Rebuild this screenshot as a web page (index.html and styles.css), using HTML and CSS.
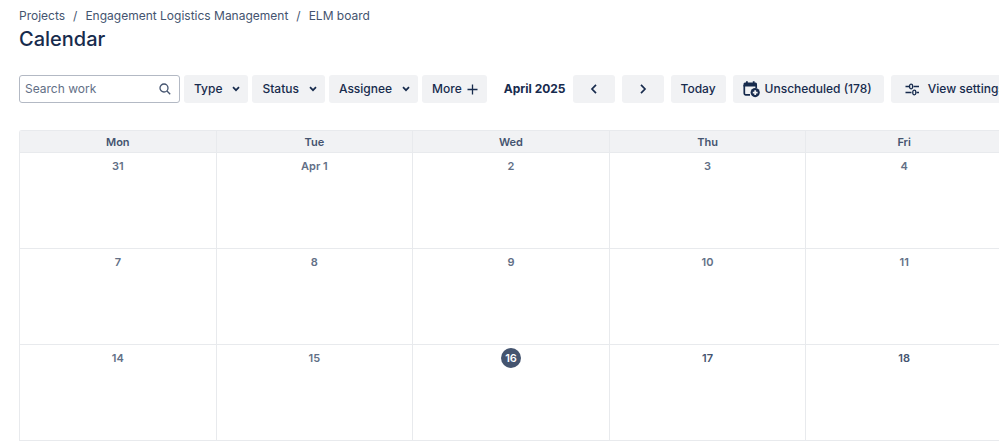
FILE: index.html
```html
<!DOCTYPE html>
<html lang="en">
<head>
<meta charset="utf-8">
<meta name="viewport" content="width=device-width, initial-scale=1">
<title>Calendar</title>
<link rel="stylesheet" href="styles.css">
</head>
<body>
<main class="page">
  <nav class="breadcrumbs" aria-label="Breadcrumbs">
    <a href="#">Projects</a><span>/</span><a href="#">Engagement Logistics Management</a><span>/</span><a href="#">ELM board</a>
  </nav>
  <h1 class="title">Calendar</h1>

  <div class="toolbar">
    <div class="filters">
      <label class="search">
        <input type="text" placeholder="Search work" aria-label="Search work">
        <svg class="icon-search" viewBox="0 0 12 12" width="12" height="12" fill="none" stroke="currentColor" stroke-width="1.3"><circle cx="5" cy="5" r="4"/><path d="M8 8l3.200 3.200"/></svg>
      </label>
      <button class="btn drop" type="button">Type<svg viewBox="0 0 8 6" width="8" height="6"><path d="M1 1.200l3 3 3-3"/></svg></button>
      <button class="btn drop" type="button">Status<svg viewBox="0 0 8 6" width="8" height="6"><path d="M1 1.200l3 3 3-3"/></svg></button>
      <button class="btn drop" type="button">Assignee<svg viewBox="0 0 8 6" width="8" height="6"><path d="M1 1.200l3 3 3-3"/></svg></button>
      <button class="btn more" type="button">More<svg viewBox="0 0 11 11" width="11" height="11"><path d="M5.500 .5v10M.5 5.500h10"/></svg></button>
    </div>
    <div class="period">
      <h2 class="month">April 2025</h2>
      <div class="actions">
        <button class="btn arrow" type="button" aria-label="Previous month"><svg viewBox="0 0 8 10" width="8" height="10"><path d="M6 .8L2 5l4 4.200"/></svg></button>
        <button class="btn arrow" type="button" aria-label="Next month"><svg viewBox="0 0 8 10" width="8" height="10"><path d="M2 .8L6 5 2 9.200"/></svg></button>
        <button class="btn" type="button">Today</button>
        <button class="btn unscheduled" type="button"><svg viewBox="0 0 17 17" width="17" height="17"><path d="M1.300 4v8.500a1.300 1.300 0 0 0 1.300 1.300H7M13.200 4v3"/><path class="solid" d="M.5 3a1.500 1.500 0 0 1 1.500-1.500h1V.3h1.800v1.200h5V.3h1.800v1.200h1A1.500 1.500 0 0 1 14 3v2.500H.5z"/><circle class="solid" cx="12.200" cy="11.600" r="4.600"/><path class="cut" d="M12.200 9.200v4.800M9.800 11.600h4.800"/></svg>Unscheduled (178)</button>
        <button class="btn settings" type="button"><svg viewBox="0 0 15 13" width="15" height="13"><path d="M.5 3.500H4M8.500 3.500h5.500M.5 9.500h6M11.500 9.500H14"/><rect x="4.600" y="1.200" width="3" height="4.600" rx="1.500"/><rect x="7.800" y="7.200" width="3" height="4.600" rx="1.500"/></svg>View settings</button>
      </div>
    </div>
  </div>

  <table class="calendar">
    <thead>
      <tr><th scope="col">Mon</th><th scope="col">Tue</th><th scope="col">Wed</th><th scope="col">Thu</th><th scope="col">Fri</th></tr>
    </thead>
    <tbody>
      <tr><td>31</td><td>Apr 1</td><td>2</td><td>3</td><td>4</td></tr>
      <tr><td>7</td><td>8</td><td>9</td><td>10</td><td>11</td></tr>
      <tr><td>14</td><td>15</td><td><span class="today">16</span></td><td class="future">17</td><td class="future">18</td></tr>
    </tbody>
  </table>
</main>
</body>
</html>
```
FILE: styles.css
```css
* {
  box-sizing: border-box;
}

html {
  overflow: hidden;
}

body {
  margin: 0;
  background: #fff;
  color: #172b4d;
  font-family: Inter, "Liberation Sans", sans-serif;
  font-size: 12px;
  line-height: 16px;
}

.page {
  padding: 8px 0 0 19px;
}

.breadcrumbs {
  display: flex;
  gap: 8px;
  color: #44546f;
}

.breadcrumbs a {
  color: inherit;
  text-decoration: none;
}

.title {
  margin: 0;
  font-size: 20px;
  font-weight: 500;
  line-height: 30px;
}

.toolbar {
  display: flex;
  gap: 17px;
  margin-top: 21px;
  white-space: nowrap;
}

.filters {
  display: flex;
  gap: 4px;
}

.period,
.actions {
  display: flex;
  align-items: center;
  gap: 7px;
}

.search {
  display: flex;
  align-items: center;
  width: 161px;
  height: 28px;
  padding: 0 8px 0 5px;
  border: 1px solid #b3b9c4;
  border-radius: 3px;
  color: #44546f;
}

.search input {
  flex: 1;
  min-width: 0;
  padding: 0;
  border: 0;
  outline: 0;
  background: none;
  color: #172b4d;
  font: inherit;
}

.search input::placeholder {
  color: #626f86;
  opacity: 1;
}

.btn {
  display: flex;
  flex: none;
  align-items: center;
  justify-content: center;
  height: 28px;
  padding: 0 10px;
  border: 0;
  border-radius: 3px;
  background: #f1f2f4;
  color: #172b4d;
  font: inherit;
  font-weight: 500;
}

.btn svg {
  flex: none;
  fill: none;
  stroke: currentColor;
  stroke-width: 1.7;
}

.btn .solid {
  fill: currentColor;
  stroke: none;
}

.btn .cut {
  stroke: #f1f2f4;
  stroke-width: 1.8;
}

.drop {
  gap: 10px;
  padding-right: 8px;
}

.more {
  gap: 5px;
  padding-right: 9px;
}

.more svg,
.settings svg {
  stroke-width: 1.3;
}

.month {
  margin: 0;
  font-size: 12px;
  font-weight: 700;
}

.arrow {
  width: 42px;
}

.unscheduled {
  gap: 5px;
  padding-right: 12px;
}

.settings {
  gap: 8px;
  padding-left: 14px;
}

.calendar {
  width: calc(100% + 4px);
  margin-top: 27px;
  border: 1px solid #e8eaed;
  border-width: 1px 0 0 1px;
  border-radius: 3px 0 0 0;
  border-spacing: 0;
  table-layout: fixed;
  font-size: 11px;
  text-align: center;
}

.calendar th,
.calendar td {
  padding: 0;
  border-right: 1px solid #e8eaed;
  border-bottom: 1px solid #e8eaed;
}

.calendar th {
  height: 22px;
  background: #f1f2f4;
  color: #44546f;
  font-weight: 600;
}

.calendar td {
  height: 96px;
  padding-top: 3px;
  color: #626f86;
  font-weight: 600;
  line-height: 20px;
  vertical-align: top;
}

.calendar .future {
  color: #44546f;
}

.today {
  display: inline-block;
  width: 20px;
  border-radius: 50%;
  background: #44546f;
  color: #fff;
}
```
